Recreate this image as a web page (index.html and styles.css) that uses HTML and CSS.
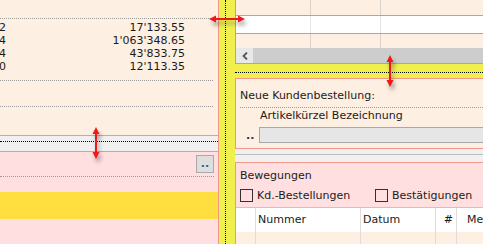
FILE: index.html
```html
<!DOCTYPE html>
<html>
    <head>
        <meta charset="utf-8">
        <title>Kundenbestellungen</title>
        <link rel="stylesheet" href="styles.css">
    </head>
    <body>
        <div class="app">
            <div class="left">
                <div class="summary">
                    <div class="totals">
                        <div class="row"><span class="key">2</span><span>17'133.55</span></div>
                        <div class="row"><span class="key">4</span><span>1'063'348.65</span></div>
                        <div class="row"><span class="key">4</span><span>43'833.75</span></div>
                        <div class="row"><span class="key">0</span><span>12'113.35</span></div>
                    </div>
                    <div class="sep"></div>
                </div>
                <div class="hsplit"><div class="grip"></div></div>
                <div class="orders">
                    <div class="orders-bar"><button class="dots" type="button">..</button></div>
                    <div class="orders-line"></div>
                    <div class="highlight"></div>
                </div>
            </div>

            <div class="vsplit"><div class="grip-v"></div></div>

            <div class="right">
                <div class="grid">
                    <div class="g-row g-top"><div class="c1"></div><div class="c2"></div><div class="c3"></div></div>
                    <div class="g-row g-sel"><div class="c1"></div><div class="c2"></div><div class="c3"></div></div>
                    <div class="g-row g-low"><div class="c1"></div><div class="c2"></div><div class="c3"></div></div>
                    <div class="scroll">
                        <div class="scroll-btn">
                            <svg width="6" height="8" viewBox="0 0 6 8"><path d="M5 0.5L1.5 4L5 7.5" fill="none" stroke="#555" stroke-width="1.8"/></svg>
                        </div>
                    </div>
                </div>
                <div class="rsplit"><div class="grip"></div></div>
                <div class="neworder">
                    <div class="title">Neue Kundenbestellung:</div>
                    <div class="nsep"></div>
                    <div class="cols">Artikelkürzel Bezeichnung</div>
                    <div class="entry">
                        <span class="entry-dots">..</span>
                        <div class="entry-field"></div>
                    </div>
                </div>
                <div class="band"><div class="band-line"></div></div>
                <div class="moves">
                    <div class="moves-title">Bewegungen</div>
                    <div class="checks">
                        <label class="check check-first"><span class="box"></span>Kd.-Bestellungen</label>
                        <label class="check"><span class="box"></span>Bestätigungen</label>
                    </div>
                    <div class="table">
                        <div class="thead">
                            <div class="t0"></div>
                            <div class="t1">Nummer</div>
                            <div class="t2">Datum</div>
                            <div class="t3">#</div>
                            <div class="t4">Menge</div>
                        </div>
                        <div class="tbody">
                            <div class="t0"></div>
                            <div class="t1"></div>
                            <div class="t2"></div>
                            <div class="t3"></div>
                            <div class="t4"></div>
                        </div>
                    </div>
                </div>
            </div>

            <!-- resize cursors -->
            <svg class="arrow arrow-h" width="36" height="10" viewBox="0 0 36 10">
                <path d="M6 5H30" stroke="#f01818" stroke-width="2"/>
                <path d="M0 5L7 1.5V8.5Z M36 5L29 1.5V8.5Z" fill="#f01818"/>
            </svg>
            <svg class="arrow arrow-v1" width="10" height="32" viewBox="0 0 10 32">
                <path d="M5 6V26" stroke="#f01818" stroke-width="2"/>
                <path d="M5 0L1.5 7H8.5Z M5 32L1.5 25H8.5Z" fill="#f01818"/>
            </svg>
            <svg class="arrow arrow-v2" width="10" height="32" viewBox="0 0 10 32">
                <path d="M5 6V26" stroke="#f01818" stroke-width="2"/>
                <path d="M5 0L1.5 7H8.5Z M5 32L1.5 25H8.5Z" fill="#f01818"/>
            </svg>
        </div>
    </body>
</html>
```

FILE: styles.css
```css
* {
  box-sizing: border-box;
}
body {
  margin: 0;
  font-family: "DejaVu Sans", Verdana, sans-serif;
  font-size: 11px;
  color: #1b1b1b;
}
.app {
  position: relative;
  display: flex;
  width: 483px;
  height: 244px;
  overflow: hidden;
}

/* left side */
.left {
  width: 219px;
  flex: none;
  display: flex;
  flex-direction: column;
  border-right: 1px solid #f2968a;
}
.summary {
  height: 136px;
  background: #fdefe1;
  border-bottom: 1px solid #f2968a;
  padding: 18px 5px 0 0;
}
.totals {
  border-top: 1px dotted #9a9a9a;
  border-bottom: 1px dotted #9a9a9a;
  padding: 2px 0 7px;
}
.row {
  display: flex;
  justify-content: space-between;
  height: 13px;
  line-height: 13px;
  padding-right: 28px;
}
.key {
  margin-left: -1px;
}
.sep {
  margin-top: 25px;
  border-top: 1px dotted #9a9a9a;
}
.hsplit {
  height: 15px;
  background: #f0f0f0;
  padding-top: 5px;
}
.grip {
  border-top: 1px dotted #000;
}
.orders {
  flex: 1;
  background: #ffdfdf;
  border-top: 1px solid #f2968a;
  padding: 3px 4px 0 0;
}
.orders-bar {
  display: flex;
  justify-content: flex-end;
}
.dots {
  width: 18px;
  height: 18px;
  padding: 0;
  border: 1px solid #a9a9a9;
  background: #dedede;
  font: inherit;
  font-weight: bold;
  color: #1d63a8;
  line-height: 14px;
}
.orders-line {
  margin-top: 3px;
  border-top: 1px dotted #9a9a9a;
}
.highlight {
  height: 27px;
  margin: 15px -4px 0 0;
  background: #ffdf3f;
}

/* splitter */
.vsplit {
  width: 16px;
  flex: none;
  background: #eff04e;
  padding-left: 6px;
}
.grip-v {
  height: 100%;
  border-left: 1px dotted #000;
}

/* right side */
.right {
  flex: 1;
  min-width: 0;
  display: flex;
  flex-direction: column;
}
.grid {
  height: 64px;
  background: #fdefe1;
  border-left: 1px solid #b9b23c;
  border-bottom: 1px solid #b9b23c;
}
.g-row {
  display: flex;
}
.g-row .c1 {
  width: 75px;
  border-right: 1px solid #d9d2ca;
}
.g-row .c2 {
  width: 70px;
  border-right: 1px solid #d9d2ca;
}
.g-row .c3 {
  flex: 1;
}
.g-top {
  height: 15px;
}
.g-sel {
  height: 19px;
  background: #fff;
  border-top: 1px solid #a8a8a8;
  border-bottom: 1px solid #a8a8a8;
}
.g-sel .c1, .g-sel .c2 {
  border-right-color: #e4e4e4;
}
.g-low {
  height: 14px;
}
.scroll {
  height: 15px;
  background: #cdcdcd;
  display: flex;
}
.scroll-btn {
  width: 17px;
  background: #e8e8e8;
  display: flex;
  align-items: center;
  justify-content: center;
}
.rsplit {
  height: 15px;
  background: #eff04e;
  padding-top: 8px;
}
.neworder {
  height: 75px;
  background: #fdefe1;
  border: 1px solid #f2968a;
  border-right: none;
  padding: 10px 0 0 4px;
}
.title {
  line-height: 14px;
}
.nsep {
  margin-top: 4px;
  border-top: 1px dotted #9a9a9a;
}
.cols {
  margin-top: 1px;
  padding-left: 20px;
  line-height: 14px;
}
.entry {
  display: flex;
  align-items: center;
  height: 16px;
  margin-top: 4px;
}
.entry-dots {
  width: 19px;
  padding-left: 6px;
  font-weight: bold;
  color: #23365a;
}
.entry-field {
  flex: 1;
  height: 16px;
  margin-right: -2px;
  background: #e6e6e6;
  border: 1px solid #a8a8a8;
}
.band {
  height: 14px;
  background: #f0f0f0;
  padding-top: 5px;
}
.band-line {
  border-top: 1px solid #bdbdbd;
}
.moves {
  flex: 1;
  background: #ffdfdf;
  border-top: 1px solid #f2968a;
  border-left: 1px solid #f2968a;
  padding: 6px 0 0 4px;
}
.moves-title {
  line-height: 14px;
}
.checks {
  display: flex;
  align-items: center;
  height: 13px;
  margin-top: 6px;
}
.check {
  display: flex;
  align-items: center;
  gap: 4px;
}
.check-first {
  width: 135px;
}
.box {
  width: 13px;
  height: 13px;
  border: 1px solid #333;
}
.table {
  margin: 5px 0 0 -4px;
  border-top: 1px solid #c6c6c6;
}
.thead, .tbody {
  display: flex;
}
.thead {
  height: 24px;
  line-height: 24px;
  background: #fff;
}
.tbody {
  height: 12px;
  background: #fdefe1;
}
.t0, .t1, .t2, .t3 {
  flex: none;
  border-right: 1px solid #e2dcd6;
}
.t0 {
  width: 20px;
}
.t1 {
  width: 105px;
  padding-left: 2px;
}
.t2 {
  width: 75px;
  padding-left: 2px;
}
.t3 {
  width: 21px;
  text-align: right;
  padding-right: 3px;
}
.t4 {
  flex: 1;
  min-width: 0;
  padding-left: 10px;
  white-space: nowrap;
  overflow: hidden;
}

/* resize cursors */
.arrow {
  position: absolute;
  filter: drop-shadow(2px 4px 2px rgba(0, 0, 0, 0.35));
}
.arrow-h {
  left: 209px;
  top: 14px;
}
.arrow-v1 {
  left: 385px;
  top: 55px;
}
.arrow-v2 {
  left: 91px;
  top: 127px;
}
```
